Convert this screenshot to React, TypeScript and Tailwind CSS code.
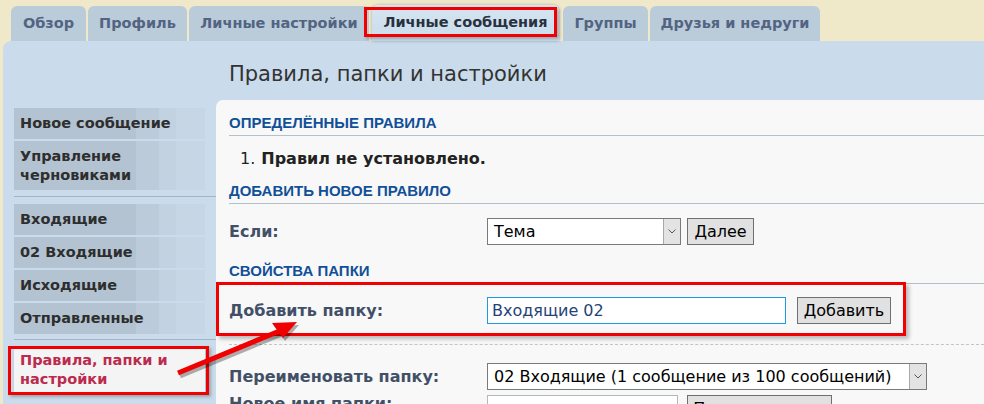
import React from 'react'

const tabs = [
  { label: 'Обзор', w: 'w-[75px]' },
  { label: 'Профиль', w: 'w-[99px]' },
  { label: 'Личные настройки', w: 'w-[180px]' },
  { label: 'Личные сообщения', w: 'w-[187px]', active: true },
  { label: 'Группы', w: 'w-[85px]' },
  { label: 'Друзья и недруги', w: 'w-[170px]' },
]

function Chevron() {
  return (
    <svg width="8" height="5" viewBox="0 0 8 5" className="block">
      <path d="M0.5 0.5 L4 4 L7.5 0.5" fill="none" stroke="#555" strokeWidth="1" />
    </svg>
  )
}

function SelectBox({ value, className }: { value: string; className: string }) {
  return (
    <div className={`flex h-[27px] border border-[#7a7a7a] bg-white ${className}`}>
      <div className="flex flex-1 items-center overflow-hidden whitespace-nowrap pl-[6px] text-[16px] text-black">
        {value}
      </div>
      <div className="flex w-[17px] items-center justify-center border-l border-[#a8a8a8] bg-[#e3e3e3]">
        <Chevron />
      </div>
    </div>
  )
}

function Button({ children, className = '' }: { children: React.ReactNode; className?: string }) {
  return (
    <div
      className={`flex h-[27px] items-center justify-center border border-[#707070] bg-[#e1e1e1] text-[16px] text-black ${className}`}
    >
      {children}
    </div>
  )
}

function SideItem({ children, tall }: { children: React.ReactNode; tall?: boolean }) {
  return (
    <div
      className={`flex w-[191px] items-center bg-[linear-gradient(to_right,#b3c3d1_0%,#b3c3d1_64%,#bccbd9_64%,#bccbd9_76%,#c3d2e0_76%,#c3d2e0_85%,#c6d6e5_85%)] px-[6px] text-[14.5px] font-bold leading-[19px] text-[#2e2e2e] ${
        tall ? 'h-[49px]' : 'h-[31px]'
      }`}
    >
      <span>{children}</span>
    </div>
  )
}

function H3({ children }: { children: React.ReactNode }) {
  return (
    <div className="flex h-[24px] items-center border-b border-[#b4c0cc] font-['Liberation_Sans',Arial,sans-serif] text-[15px] font-bold uppercase text-[#115098]">
      {children}
    </div>
  )
}

export default function App() {
  return (
    <div className="relative h-[404px] w-[984px] overflow-hidden bg-[#efe9ca] font-['DejaVu_Sans',Verdana,sans-serif]">
      {/* Tabs */}
      <div className="flex h-[41px] items-end gap-[2px] pl-[11px]">
        {tabs.map((t) =>
          t.active ? (
            <div key={t.label} className={`relative ml-[1px] mr-[2px] ${t.w}`}>
              <div className="flex h-[36px] items-center justify-center whitespace-nowrap rounded-t-[6px] bg-[linear-gradient(#d6e4f0,#cadceb)] text-[14.5px] font-bold text-[#28313f] shadow-[0_0_3px_rgba(90,110,130,0.5)]">
                {t.label}
              </div>
              <div className="pointer-events-none absolute -left-[8px] right-[2px] top-[2px] bottom-[4px] border-[3px] border-[#f00000] shadow-[2px_2px_3px_rgba(0,0,0,0.25)]" />
            </div>
          ) : (
            <div
              key={t.label}
              className={`flex h-[35px] items-center justify-center whitespace-nowrap rounded-t-[6px] bg-[#bacbda] text-[14.5px] font-bold text-[#536482] ${t.w}`}
            >
              {t.label}
            </div>
          ),
        )}
      </div>

      {/* Main panel */}
      <div className="ml-[3px] flex h-[363px] rounded-tl-[8px] bg-[#cadceb]">
        {/* Sidebar */}
        <div className="w-[213px] shrink-0 pl-[11px] pt-[67px]">
          <div className="flex flex-col gap-[2px]">
            <SideItem>Новое сообщение</SideItem>
            <SideItem tall>
              Управление
              <br />
              черновиками
            </SideItem>
          </div>
          <div className="mb-[7px] mt-[6px] h-px w-[202px] bg-[#a3b3c3]" />
          <div className="flex flex-col gap-[2px]">
            <SideItem>Входящие</SideItem>
            <SideItem>02 Входящие</SideItem>
            <SideItem>Исходящие</SideItem>
            <SideItem>Отправленные</SideItem>
          </div>
          <div className="mb-[8px] mt-[5px] h-px w-[202px] bg-[#a3b3c3]" />
          <div className="relative w-[191px]">
            <div className="flex h-[44px] items-center bg-[#f4f4f4] px-[6px] text-[14.5px] font-bold leading-[19px] text-[#bc2a4d] shadow-[1px_1px_3px_rgba(0,0,0,0.2)]">
              <span>
                Правила, папки и
                <br />
                настройки
              </span>
            </div>
            <div className="pointer-events-none absolute -left-[6px] -right-[4px] -top-[2px] -bottom-[3px] border-[3px] border-[#f00000] shadow-[2px_2px_3px_rgba(0,0,0,0.25)]" />
          </div>
        </div>

        {/* Content column */}
        <div className="flex flex-1 flex-col">
          <div className="h-[59px] shrink-0 pl-[13px] pt-[21px] text-[21px] leading-[24px] text-[#333]">
            Правила, папки и настройки
          </div>
          <div className="flex-1 rounded-tl-[7px] bg-[#f8f8f8] pl-[13px] pt-[12px]">
            <H3>Определённые правила</H3>
            <div className="flex h-[44px] items-start pl-[11px] pt-[13px] text-[16px] leading-[20px] text-[#222]">
              <span className="mr-[6px] font-normal">1.</span>
              <span className="font-bold">Правил не установлено.</span>
            </div>
            <H3>Добавить новое правило</H3>
            <div className="flex items-center py-[14px]">
              <div className="w-[258px] text-[16px] font-bold text-[#425067]">Если:</div>
              <SelectBox value="Тема" className="w-[194px]" />
              <Button className="ml-[6px] w-[67px]">Далее</Button>
            </div>
            <div className="mt-[1px]">
              <H3>Свойства папки</H3>
            </div>
            <div className="border-b border-dashed border-[#c4c4c4] pb-[20px] pt-[13px]">
              <div className="relative flex items-center">
                <div className="w-[258px] text-[16px] font-bold text-[#425067]">Добавить папку:</div>
                <div className="flex h-[27px] w-[299px] items-center border border-[#1d9be2] bg-white pl-[4px] text-[16px] text-[#1f4478]">
                  Входящие 02
                </div>
                <Button className="ml-[11px] w-[94px]">Добавить</Button>
                <div className="pointer-events-none absolute -left-[13px] -top-[15px] h-[54px] w-[690px] border-[3px] border-[#f00000] shadow-[3px_3px_4px_rgba(0,0,0,0.25)]" />
              </div>
            </div>
            <div className="flex pt-[18px]">
              <div className="w-[258px] text-[16px] font-bold leading-[27px] text-[#425067]">
                <div className="h-[27px]">Переименовать папку:</div>
                <div className="h-[27px]">Новое имя папки:</div>
              </div>
              <div className="flex flex-col gap-[5px]">
                <SelectBox value="02 Входящие (1 сообщение из 100 сообщений)" className="w-[440px]" />
                <div className="flex">
                  <div className="h-[27px] w-[191px] border border-[#b0bcbc] bg-white" />
                  <Button className="ml-[9px] w-[145px] bg-[#d2d2d2]">Переименовать</Button>
                </div>
              </div>
            </div>
          </div>
        </div>
      </div>

      {/* Annotation arrow */}
      <svg
        className="pointer-events-none absolute left-0 top-0"
        width="984"
        height="404"
        viewBox="0 0 984 404"
      >
        <g transform="translate(2 3)" opacity="0.3">
          <line x1="178" y1="373" x2="282" y2="330" stroke="#000" strokeWidth="5" />
          <polygon points="272,323 297,322 283,338" fill="#000" />
        </g>
        <line x1="178" y1="373" x2="282" y2="330" stroke="#f00000" strokeWidth="5" />
        <polygon points="272,323 297,322 283,338" fill="#f00000" />
      </svg>
    </div>
  )
}
